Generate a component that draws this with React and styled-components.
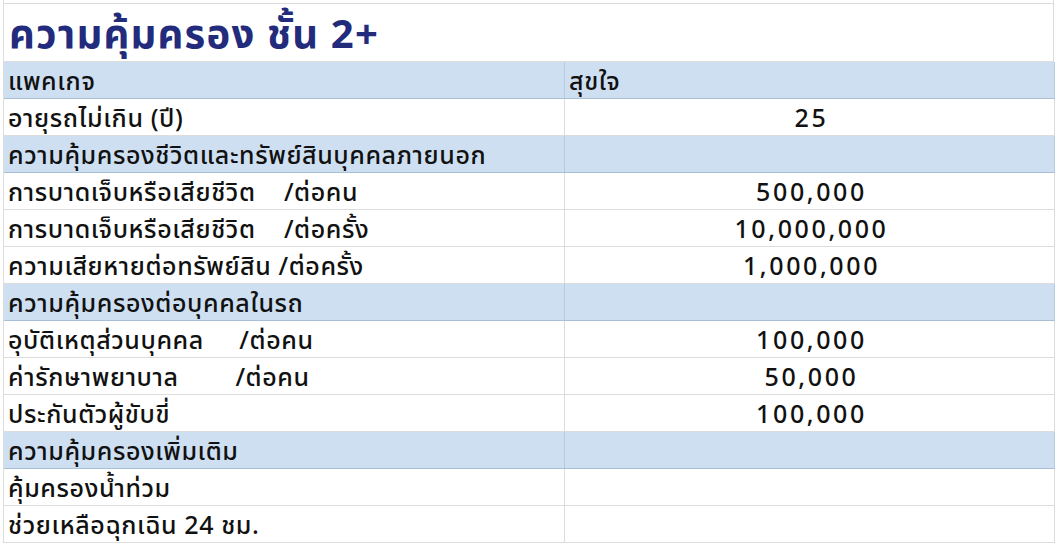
import React from 'react'
import styled, { createGlobalStyle } from 'styled-components'

const GlobalStyle = createGlobalStyle`
  html, body {
    margin: 0;
    padding: 0;
    background: #ffffff;
  }
  body {
    font-family: "Noto Sans Thai", "Noto Sans", "Noto Sans CJK SC", sans-serif;
    color: #111111;
  }
`

const Sheet = styled.div`
  width: 1054px;
  padding-left: 3px;
  box-sizing: border-box;
`

const TopStrip = styled.div`
  height: 4px;
  border-bottom: 1px solid #dcdcdc;
  border-left: 1px solid #dcdcdc;
  border-right: 1px solid #dcdcdc;
  box-sizing: border-box;
`

const Title = styled.div`
  height: 58px;
  box-sizing: border-box;
  border-left: 1px solid #dcdcdc;
  border-right: 1px solid #dcdcdc;
  border-bottom: 1px solid #dcdcdc;
  padding: 0 0 0 5px;
  display: flex;
  align-items: flex-end;
  font-size: 40px;
  font-weight: 700;
  letter-spacing: 1.2px;
  color: #222b7c;
  line-height: 50px;
`

const Grid = styled.div`
  display: grid;
  grid-template-columns: 561px 490px;
  border-left: 1px solid #dcdcdc;
`

const Cell = styled.div`
  height: 37px;
  box-sizing: border-box;
  padding: 3px 0 0 4px;
  display: flex;
  align-items: center;
  justify-content: ${p => (p.$center ? 'center' : 'flex-start')};
  white-space: pre;
  font-size: 25px;
  font-weight: 500;
  letter-spacing: ${p => (p.$num ? '2.6px' : '0.6px')};
  background: ${p => (p.$band ? '#cedff1' : '#ffffff')};
  border-right: 1px solid ${p => (p.$band ? '#b7cbe0' : '#dcdcdc')};
  border-bottom: 1px solid ${p => (p.$band ? '#a9bfd6' : '#dcdcdc')};
`

// band = blue section row, left = value cell left-aligned (header)
const rows = [
  { label: 'แพคเกจ', value: 'สุขใจ', band: true, left: true },
  { label: 'อายุรถไม่เกิน (ปี)', value: '25' },
  { label: 'ความคุ้มครองชีวิตและทรัพย์สินบุคคลภายนอก', value: '', band: true },
  { label: 'การบาดเจ็บหรือเสียชีวิต    /ต่อคน', value: '500,000' },
  { label: 'การบาดเจ็บหรือเสียชีวิต    /ต่อครั้ง', value: '10,000,000' },
  { label: 'ความเสียหายต่อทรัพย์สิน /ต่อครั้ง', value: '1,000,000' },
  { label: 'ความคุ้มครองต่อบุคคลในรถ', value: '', band: true },
  { label: 'อุบัติเหตุส่วนบุคคล     /ต่อคน', value: '100,000' },
  { label: 'ค่ารักษาพยาบาล        /ต่อคน', value: '50,000' },
  { label: 'ประกันตัวผู้ขับขี่', value: '100,000' },
  { label: 'ความคุ้มครองเพิ่มเติม', value: '', band: true },
  { label: 'คุ้มครองน้ำท่วม', value: '' },
  { label: 'ช่วยเหลือฉุกเฉิน 24 ชม.', value: '' },
]

const App = () => {
  return (
    <>
      <GlobalStyle />
      <Sheet>
        <TopStrip />
        <Title>ความคุ้มครอง ชั้น 2+</Title>
        <Grid>
          {rows.map((r) => (
            <React.Fragment key={r.label}>
              <Cell $band={r.band}>{r.label}</Cell>
              <Cell $band={r.band} $center={!r.left} $num={!r.left}>
                {r.value}
              </Cell>
            </React.Fragment>
          ))}
        </Grid>
      </Sheet>
    </>
  )
}

export default App
